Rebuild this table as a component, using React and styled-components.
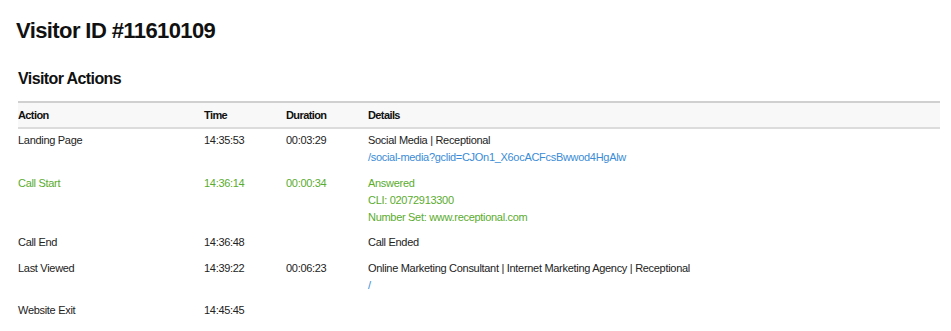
import React from 'react';
import styled, { createGlobalStyle } from 'styled-components';

const GlobalStyle = createGlobalStyle`
  html, body {
    margin: 0;
    padding: 0;
    background: #fff;
  }
  body {
    font-family: "Liberation Sans", Arial, sans-serif;
    color: #222;
  }
`;

const Page = styled.div`
  padding: 18px 11px 0 16px;
`;

const Title = styled.h1`
  margin: 0;
  font-size: 22px;
  line-height: 26px;
  font-weight: bold;
  letter-spacing: -0.6px;
  color: #111;
`;

const SectionTitle = styled.h2`
  margin: 25px 0 0 2px;
  font-size: 16px;
  line-height: 20px;
  font-weight: bold;
  letter-spacing: -0.6px;
  color: #111;
`;

const Table = styled.table`
  margin: 12px 0 0 2px;
  width: 922px;
  border-collapse: collapse;
  font-size: 11px;
  letter-spacing: -0.3px;
`;

const HeadCell = styled.th`
  text-align: left;
  font-weight: bold;
  letter-spacing: -0.6px;
  background: #f8f8f8;
  border-top: 2px solid #d0d0d0;
  border-bottom: 2px solid #dcdcdc;
  padding: 5px 0 4px 0;
  line-height: 15px;
  width: ${p => p.$w || 'auto'};
  color: #111;
`;

const Cell = styled.td`
  vertical-align: top;
  padding: ${p => (p.$first ? '3px' : '1px')} 0 7.5px 0;
  line-height: 17px;
  color: ${p => (p.$green ? '#5aac2e' : '#222')};
`;

const Line = styled.div`
  color: ${p => (p.$link ? '#3a8cd6' : 'inherit')};
`;

const rows = [
  {
    action: 'Landing Page',
    time: '14:35:53',
    duration: '00:03:29',
    details: [
      { text: 'Social Media | Receptional' },
      { text: '/social-media?gclid=CJOn1_X6ocACFcsBwwod4HgAlw', link: true },
    ],
  },
  {
    action: 'Call Start',
    time: '14:36:14',
    duration: '00:00:34',
    green: true,
    details: [
      { text: 'Answered' },
      { text: 'CLI: 02072913300' },
      { text: 'Number Set: www.receptional.com' },
    ],
  },
  {
    action: 'Call End',
    time: '14:36:48',
    duration: '',
    details: [{ text: 'Call Ended' }],
  },
  {
    action: 'Last Viewed',
    time: '14:39:22',
    duration: '00:06:23',
    details: [
      { text: 'Online Marketing Consultant | Internet Marketing Agency | Receptional' },
      { text: '/', link: true },
    ],
  },
  {
    action: 'Website Exit',
    time: '14:45:45',
    duration: '',
    details: [],
  },
];

export default function App() {
  return (
    <Page>
      <GlobalStyle />
      <Title>Visitor ID #11610109</Title>
      <SectionTitle>Visitor Actions</SectionTitle>
      <Table>
        <thead>
          <tr>
            <HeadCell $w="186px">Action</HeadCell>
            <HeadCell $w="82px">Time</HeadCell>
            <HeadCell $w="82px">Duration</HeadCell>
            <HeadCell>Details</HeadCell>
          </tr>
        </thead>
        <tbody>
          {rows.map((r, i) => (
            <tr key={r.action}>
              <Cell $first={i === 0} $green={r.green}>{r.action}</Cell>
              <Cell $first={i === 0} $green={r.green}>{r.time}</Cell>
              <Cell $first={i === 0} $green={r.green}>{r.duration}</Cell>
              <Cell $first={i === 0} $green={r.green}>
                {r.details.map(d => (
                  <Line key={d.text} $link={d.link}>{d.text}</Line>
                ))}
              </Cell>
            </tr>
          ))}
        </tbody>
      </Table>
    </Page>
  );
}
